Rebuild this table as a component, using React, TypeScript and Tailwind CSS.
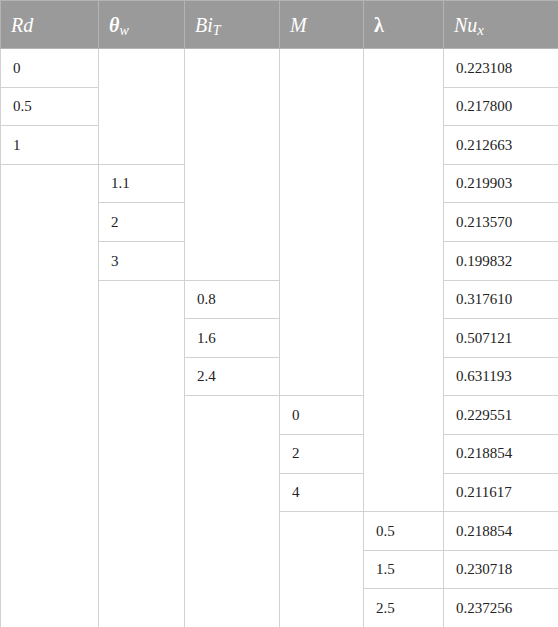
const rows: (string | { span: number } | null)[][] = [
  ['0', { span: 3 }, { span: 6 }, { span: 9 }, { span: 12 }, '0.223108'],
  ['0.5', null, null, null, null, '0.217800'],
  ['1', null, null, null, null, '0.212663'],
  [{ span: 12 }, '1.1', null, null, null, '0.219903'],
  [null, '2', null, null, null, '0.213570'],
  [null, '3', null, null, null, '0.199832'],
  [null, { span: 9 }, '0.8', null, null, '0.317610'],
  [null, null, '1.6', null, null, '0.507121'],
  [null, null, '2.4', null, null, '0.631193'],
  [null, null, { span: 6 }, '0', null, '0.229551'],
  [null, null, null, '2', null, '0.218854'],
  [null, null, null, '4', null, '0.211617'],
  [null, null, null, { span: 3 }, '0.5', '0.218854'],
  [null, null, null, null, '1.5', '0.230718'],
  [null, null, null, null, '2.5', '0.237256'],
];

const widths = ['w-[98px]', 'w-[86px]', 'w-[95px]', 'w-[84px]', 'w-[80px]', 'w-[115px]'];

export default function App() {
  return (
    <div className="w-[558px] h-[627px] bg-white font-[family-name:Liberation_Serif,serif] text-[#222]">
      <table className="w-[558px] table-fixed border-collapse">
        <colgroup>
          {widths.map((w, i) => (
            <col key={i} className={w} />
          ))}
        </colgroup>
        <thead>
          <tr className="h-[48px] bg-[#9a9a9a] text-white text-[20px] italic">
            <th className="border border-[#b4b4b4] pl-[10px] text-left font-normal">Rd</th>
            <th className="border border-[#b4b4b4] pl-[10px] text-left font-bold">
              θ<sub className="text-[14px] font-normal">w</sub>
            </th>
            <th className="border border-[#b4b4b4] pl-[10px] text-left font-normal">
              Bi<sub className="text-[14px]">T</sub>
            </th>
            <th className="border border-[#b4b4b4] pl-[10px] text-left font-normal">M</th>
            <th className="border border-[#b4b4b4] pl-[10px] text-left font-bold not-italic">λ</th>
            <th className="border border-[#b4b4b4] pl-[10px] text-left font-normal">
              Nu<sub className="text-[15px]">x</sub>
            </th>
          </tr>
        </thead>
        <tbody className="text-[15px]">
          {rows.map((r, i) => (
            <tr key={i} className="h-[38.6px]">
              {r.map((c, j) => {
                if (c === null) return null;
                if (typeof c === 'object')
                  return <td key={j} rowSpan={c.span} className="border border-[#d2d2d2]" />;
                return (
                  <td key={j} className="border border-[#d2d2d2] pl-[12px] align-middle">
                    {c}
                  </td>
                );
              })}
            </tr>
          ))}
        </tbody>
      </table>
    </div>
  );
}
